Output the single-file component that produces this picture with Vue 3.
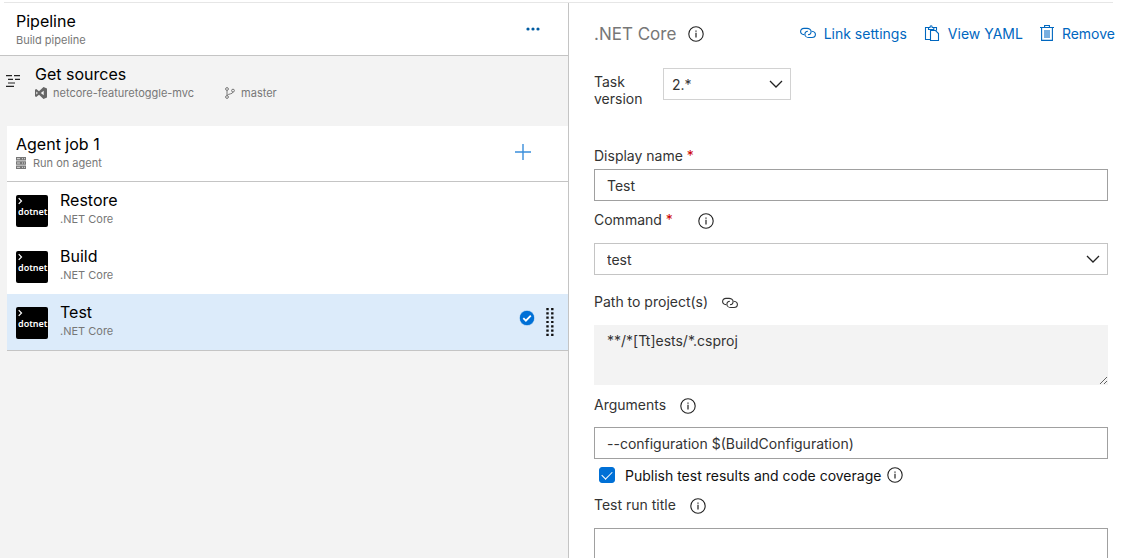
<script setup>
import { h, ref } from 'vue'

const tasks = ref([
  { name: 'Restore', kind: '.NET Core' },
  { name: 'Build', kind: '.NET Core' },
  { name: 'Test', kind: '.NET Core' },
])
const selected = ref(2)
const version = ref('2.*')
const displayName = ref('Test')
const command = ref('test')
const projects = ref('**/*[Tt]ests/*.csproj')
const args = ref('--configuration $(BuildConfiguration)')
const publish = ref(true)
const runTitle = ref('')

const InfoIcon = () =>
  h('svg', { width: 16, height: 16, viewBox: '0 0 16 16', fill: 'none', stroke: '#222', 'aria-hidden': 'true' }, [
    h('circle', { cx: 8, cy: 8, r: 7.2, 'stroke-width': 1.1 }),
    h('path', { d: 'M8 6.8v4.7M8 4.4v1.3', 'stroke-width': 1.2 }),
  ])

const LinkIcon = () =>
  h('svg', { width: 16, height: 12, viewBox: '0 0 16 12', fill: 'none', stroke: 'currentColor', 'stroke-width': 1.1, 'aria-hidden': 'true' }, [
    h('path', { d: 'M4.2 7.6C2 7.4.6 6.2.6 4.4.6 2.6 2 1.4 4 1.4h3c2 0 4.1 1.3 4.1 3.1 0 1.7-1.3 3.1-3 3.1' }),
    h('path', { d: 'M11.8 4.2c2.2.2 3.6 1.5 3.6 3.3 0 1.8-1.4 3-3.4 3H9c-2 0-4.1-1.3-4.1-3.1 0-1.7 1.3-3.1 3-3.1' }),
  ])

const Chevron = () =>
  h('svg', { class: 'chevron', width: 14, height: 8, viewBox: '0 0 14 8', fill: 'none', stroke: '#222', 'stroke-width': 1.3, 'aria-hidden': 'true' }, [
    h('path', { d: 'M1 1l6 6 6-6' }),
  ])
</script>

<template>
  <div class="page">
    <div class="rule"></div>
    <main class="columns">
      <section class="pipeline" aria-label="Pipeline">
        <header class="head">
          <div>
            <h1 class="title">Pipeline</h1>
            <p class="sub">Build pipeline</p>
          </div>
          <button class="more" type="button" aria-label="More actions">
            <svg width="14" height="4" viewBox="0 0 14 4" fill="#005ba1"><circle cx="2" cy="2" r="1.6" /><circle cx="7" cy="2" r="1.6" /><circle cx="12" cy="2" r="1.6" /></svg>
          </button>
        </header>

        <div class="sources">
          <svg class="sources-icon" width="14" height="12" viewBox="0 0 14 12" stroke="#222" stroke-width="1.2"><path d="M0 .7h6M8 .7h6M2 4.4h5M9 4.4h5M2 8h7M0 11.3h8" /></svg>
          <div>
            <h2 class="title">Get sources</h2>
            <p class="sub meta">
              <svg width="12" height="12" viewBox="0 0 12 12" fill="#666" fill-rule="evenodd"><path d="M8.5 0L12 1.4v9.2L8.5 12 4 7.7 1.2 9.9 0 9.2V2.8l1.2-.7L4 4.3zM8.7 3.7L5.8 6l2.9 2.3zM1.3 4.4v3.2L2.9 6z" /></svg>
              <span class="repo">netcore-featuretoggle-mvc</span>
              <svg width="10" height="12" viewBox="0 0 10 12" fill="none" stroke="#777"><circle cx="2" cy="2" r="1.4" /><circle cx="2" cy="10" r="1.4" /><circle cx="8" cy="3.6" r="1.4" /><path d="M2 3.4v5.2M8 5c0 2.2-5.2 1.6-6 3.6" /></svg>
              <span>master</span>
            </p>
          </div>
        </div>

        <div class="job">
          <div class="job-head">
            <div>
              <h2 class="title">Agent job 1</h2>
              <p class="sub meta agent">
                <svg width="10" height="12" viewBox="0 0 10 12"><path fill="#777" d="M0 0h10v3.4H0zM0 4.3h10v3.4H0zM0 8.6h10V12H0z" /><path stroke="#ddd" d="M1 1.7h3M1 6h3M1 10.3h3M6 1.7h1M6 6h1M6 10.3h1M8 1.7h1M8 6h1M8 10.3h1" /></svg>
                <span>Run on agent</span>
              </p>
            </div>
            <button class="add" type="button" aria-label="Add a task">
              <svg width="16" height="16" viewBox="0 0 16 16" stroke="#3a8edb" stroke-width="1.4"><path d="M8 0v16M0 8h16" /></svg>
            </button>
          </div>
          <ul class="tasks">
            <li v-for="(task, i) in tasks" :key="task.name" class="task" :class="{ active: i === selected }" @click="selected = i">
              <span class="logo"><svg width="5" height="8" viewBox="0 0 5 8" fill="none" stroke="#fff" stroke-width="1.2"><path d="M.7 1.2l2.8 2.8L.7 6.8" /></svg><span>dotnet</span></span>
              <div class="task-text">
                <h3 class="title">{{ task.name }}</h3>
                <p class="sub">{{ task.kind }}</p>
              </div>
              <template v-if="i === selected">
                <svg class="tick" width="16" height="16" viewBox="0 0 16 16"><circle cx="8" cy="8" r="7.7" fill="#0070d6" stroke="#fff" stroke-width=".6" /><path d="M4.3 8.2l2.6 2.5 4.9-5" fill="none" stroke="#fff" stroke-width="1.8" /></svg>
                <svg class="grip" width="8" height="28" viewBox="0 0 8 28" stroke="#111" stroke-width="2.4" stroke-dasharray="2.2 2.1"><path d="M1.5 0v28M6.3 0v28" /></svg>
              </template>
            </li>
          </ul>
        </div>
      </section>

      <section class="details" aria-label="Task settings">
        <header class="toolbar">
          <h2 class="heading">.NET Core</h2>
          <InfoIcon />
          <nav class="actions">
            <a href="#"><LinkIcon />Link settings</a>
            <a href="#"><svg width="16" height="16" viewBox="0 0 16 16" fill="none" stroke="#0067bf" stroke-width="1.1"><path d="M6.5 14.5h-5v-12h3M9.8 2.5h2.7v3M4.5 4.5v-2H6C6 .2 8.2.2 8.2 2.5h1.6v2zM6.5 5.5h5l3 3v7h-8z" /></svg>View YAML</a>
            <a href="#"><svg width="14" height="16" viewBox="0 0 14 16" fill="none" stroke="#0067bf" stroke-width="1.1"><path fill="#79afe0" stroke="none" d="M4 5h6v8H4z" /><path d="M0 2.5h14M4.6 2.5v-2h4.8v2M1.6 2.5v12.9h10.8V2.5" /></svg>Remove</a>
          </nav>
        </header>

        <div class="version">
          <label for="version">Task version</label>
          <div class="select small">
            <select id="version" v-model="version"><option>2.*</option><option>1.*</option></select>
            <Chevron />
          </div>
        </div>

        <div class="label first"><label for="name">Display name <b>*</b></label></div>
        <input id="name" v-model="displayName" class="box" type="text" required />

        <div class="label command"><label for="command">Command <b>*</b></label><InfoIcon /></div>
        <div class="select">
          <select id="command" v-model="command"><option>build</option><option>restore</option><option>test</option></select>
          <Chevron />
        </div>

        <div class="label path"><label for="projects">Path to project(s)</label><LinkIcon /></div>
        <textarea id="projects" v-model="projects" readonly></textarea>

        <div class="label arguments"><label for="args">Arguments</label><InfoIcon /></div>
        <input id="args" v-model="args" class="box" type="text" />

        <div class="check">
          <input id="publish" v-model="publish" type="checkbox" />
          <label for="publish">Publish test results and code coverage</label>
          <InfoIcon />
        </div>

        <div class="label run"><label for="run">Test run title</label><InfoIcon /></div>
        <input id="run" v-model="runTitle" class="box" type="text" />
      </section>
    </main>
  </div>
</template>

<style>
body {
  margin: 0;
  background: #fff;
}
</style>

<style scoped>
* {
  box-sizing: border-box;
}
.page {
  display: flex;
  flex-direction: column;
  height: 100vh;
  overflow: hidden;
  font-family: Inter, "Liberation Sans", sans-serif;
  font-size: 14px;
  color: #333;
}
svg {
  flex: none;
  display: block;
}
h1, h2, h3, p, ul {
  margin: 0;
  padding: 0;
  font-weight: 400;
}
button {
  border: 0;
  padding: 0;
  background: none;
}
.rule {
  flex: none;
  height: 1px;
  margin: 2px 8px 0 4px;
  background: #e6e6e6;
}
.columns {
  flex: 1;
  min-height: 0;
  display: grid;
  grid-template-columns: 569fr 552fr;
}
.pipeline {
  background: #f3f3f3;
  border-right: 1px solid #c4c4c4;
}
.title {
  font-size: 16px;
  line-height: 20px;
  color: #000;
}
.sub {
  font-size: 11px;
  line-height: 18px;
  color: #777;
}
.head {
  display: flex;
  justify-content: space-between;
  height: 53px;
  padding: 8px 28px 6px 16px;
  background: #fff;
  border-bottom: 1px solid #c4c4c4;
}
.more {
  align-self: flex-start;
  margin-top: 16px;
}
.sources {
  display: flex;
  gap: 15px;
  height: 70px;
  padding: 8px 0 0 6px;
}
.sources-icon {
  margin-top: 11px;
}
.meta {
  display: flex;
  align-items: center;
  gap: 6px;
}
.agent {
  gap: 7px;
}
.repo {
  margin-right: 25px;
}
.job {
  margin-left: 7px;
  background: #fff;
  border-bottom: 1px solid #c4c4c4;
}
.job-head {
  display: flex;
  justify-content: space-between;
  padding: 8px 37px 9px 9px;
  border-bottom: 1px solid #c4c4c4;
}
.add {
  align-self: flex-start;
  margin-top: 10px;
}
.tasks {
  list-style: none;
}
.task {
  display: flex;
  align-items: center;
  height: 56px;
  padding: 0 14px 0 9px;
}
.task.active {
  background: #dcebfa;
}
.logo {
  display: flex;
  flex-direction: column;
  width: 32px;
  height: 32px;
  margin-top: 2px;
  padding: 2px;
  border-radius: 2px;
  background: #000;
  color: #fff;
  font: 600 9px/13px "Noto Sans", sans-serif;
}
.task-text {
  flex: 1;
  padding-bottom: 2px;
  margin-left: 12px;
}
.tick {
  margin: 0 11px 8px 0;
}
.details {
  padding: 0 13px 0 25px;
}
.toolbar {
  display: flex;
  align-items: center;
  gap: 12px;
  height: 61px;
  margin-right: -7px;
}
.heading {
  font-size: 17px;
  color: #777;
}
.actions {
  display: flex;
  gap: 17px;
  margin: 0 0 1px auto;
}
.actions a {
  display: flex;
  align-items: center;
  gap: 8px;
  color: #0067bf;
  text-decoration: none;
  white-space: nowrap;
}
.version {
  display: flex;
  gap: 9px;
  height: 44px;
  margin-top: 4px;
}
.version label {
  width: 60px;
  padding-top: 5px;
  line-height: 17px;
}
.label {
  display: flex;
  align-items: center;
  gap: 14px;
  height: 20px;
}
.label b {
  font-weight: 400;
  color: #c00;
}
.label svg {
  margin-top: 3px;
}
.first {
  margin: 33px 0 4px;
}
.command {
  gap: 25px;
  margin: 8px 0 14px;
}
.path {
  margin: 16px 0 14px;
}
.arguments {
  margin: 9px 0 13px;
}
.run {
  margin: 9px 0 14px;
}
.box, select {
  display: block;
  width: 100%;
  height: 32px;
  padding: 0 12px;
  border: 1px solid #a0a0a0;
  border-radius: 0;
  background: #fff;
  font: inherit;
  color: #333;
}
.select {
  position: relative;
}
.select select {
  appearance: none;
  border-color: #c4c4c4;
}
.small {
  width: 128px;
  height: 32px;
}
.small select {
  padding: 0 8px;
  border-color: #d2d2d2;
}
.chevron {
  position: absolute;
  top: 12px;
  right: 8px;
  pointer-events: none;
}
textarea {
  display: block;
  width: 100%;
  height: 60px;
  padding: 7px 13px;
  border: 0;
  border-radius: 0;
  background: #f3f3f3;
  font: inherit;
  line-height: 17px;
  color: #333;
  resize: vertical;
}
.check {
  display: flex;
  align-items: center;
  height: 20px;
  margin-top: 6px;
  padding-left: 5px;
  color: #111;
}
.check input {
  appearance: none;
  width: 16px;
  height: 16px;
  margin: 0 10px 0 0;
  border: 1px solid #0070d6;
  border-radius: 3px;
  display: grid;
  place-items: center;
}
.check input:checked {
  background: #0070d6;
}
.check input:checked::after {
  content: "";
  width: 9px;
  height: 5px;
  margin-bottom: 3px;
  border: solid #fff;
  border-width: 0 0 1px 1px;
  transform: rotate(-45deg);
}
.check label {
  margin-right: 6px;
}
</style>
